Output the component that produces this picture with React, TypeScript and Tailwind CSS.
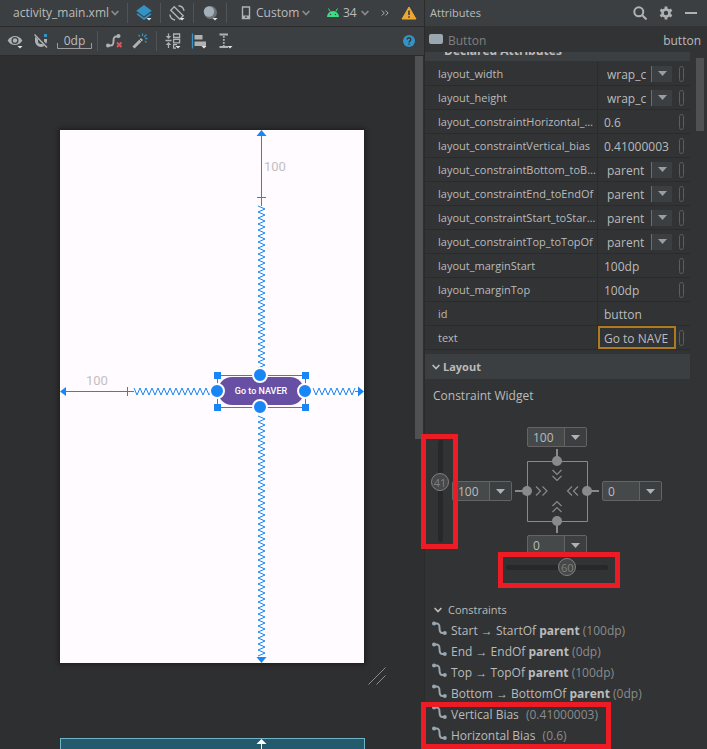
import type { ReactNode } from 'react';
import clsx from 'clsx';

interface Attribute {
  name: string;
  value: string;
  kind: 'select' | 'input';
  flag?: boolean;
  focused?: boolean;
}

const attributes: Attribute[] = [
  { name: 'layout_width', value: 'wrap_c', kind: 'select', flag: true },
  { name: 'layout_height', value: 'wrap_c', kind: 'select', flag: true },
  { name: 'layout_constraintHorizontal_bias', value: '0.6', kind: 'input', flag: true },
  { name: 'layout_constraintVertical_bias', value: '0.41000003', kind: 'input', flag: true },
  { name: 'layout_constraintBottom_toBottomOf', value: 'parent', kind: 'select', flag: true },
  { name: 'layout_constraintEnd_toEndOf', value: 'parent', kind: 'select', flag: true },
  { name: 'layout_constraintStart_toStartOf', value: 'parent', kind: 'select', flag: true },
  { name: 'layout_constraintTop_toTopOf', value: 'parent', kind: 'select', flag: true },
  { name: 'layout_marginStart', value: '100dp', kind: 'input', flag: true },
  { name: 'layout_marginTop', value: '100dp', kind: 'input', flag: true },
  { name: 'id', value: 'button', kind: 'input' },
  { name: 'text', value: 'Go to NAVE', kind: 'input', flag: true, focused: true },
];

const constraints = [
  { from: 'Start', to: 'StartOf', margin: '(100dp)' },
  { from: 'End', to: 'EndOf', margin: '(0dp)' },
  { from: 'Top', to: 'TopOf', margin: '(100dp)' },
  { from: 'Bottom', to: 'BottomOf', margin: '(0dp)' },
];

const biases = [
  { label: 'Vertical Bias', value: '(0.41000003)' },
  { label: 'Horizontal Bias', value: '(0.6)' },
];

// points of a spring line that runs along one axis
function spring(start: number, end: number, center: number, vertical: boolean) {
  const points: string[] = [];
  let side = -1;
  for (let p = start; p <= end; p += 3) {
    const across = center + side * 3.5;
    points.push(vertical ? `${across},${p}` : `${p},${across}`);
    side = -side;
  }
  return points.join(' ');
}

function Chevron({ className }: { className?: string }) {
  return (
    <svg viewBox="0 0 8 6" className={clsx('h-[6px] w-2', className)} fill="none" stroke="currentColor" strokeWidth={1.7}>
      <path d="M0.6 1 4 4.6 7.4 1" />
    </svg>
  );
}

function Corner() {
  return <path d="M10.5 13h5l-2.5 2.5z" fill="#e4e4e4" stroke="none" />;
}

function ToolButton({ label, children }: { label: string; children: ReactNode }) {
  return (
    <button type="button" aria-label={label} className="size-4 shrink-0">
      <svg viewBox="0 0 16 16" className="size-4 overflow-visible" fill="none">
        {children}
      </svg>
    </button>
  );
}

function Separator() {
  return <span className="h-5 w-px shrink-0 bg-[#515355]" />;
}

function ToolSelect({ label, value, className }: { label: string; value: string; className: string }) {
  return (
    <div className={clsx('relative flex shrink-0 items-center', className)}>
      <select aria-label={label} className="w-full appearance-none text-[#bbbbbb] outline-none">
        <option>{value}</option>
      </select>
      <Chevron className="pointer-events-none absolute right-0 text-[#8a8d8f]" />
    </div>
  );
}

function EditorToolbar() {
  return (
    <>
      <div className="flex h-[27px] shrink-0 items-center border-b border-[#2b2b2b] bg-[#3c3f41] pl-[13px]">
        <ToolSelect label="File" value="activity_main.xml" className="w-[106px]" />
        <div className="ml-2 flex items-center gap-2">
          <Separator />
          <ToolButton label="Select design surface">
            <path d="M8 0 15.800 5.800 8 11.500 0.200 5.800z" fill="#3592c4" />
            <path d="M1.800 8.200 8 12.800l6.200-4.600 1.300 1L8 15 0.500 9.200z" fill="#3592c4" />
            <Corner />
          </ToolButton>
          <Separator />
          <ToolButton label="Orientation">
            <g stroke="#afb1b3" strokeWidth={1.4}>
              <path d="m5.200 1.800 9 9-3.400 3.400-9-9z" />
              <path d="M9.500 0.800c3 .2 5 2.200 5.500 5M0.900 9.500c.3 3 2.200 5 5.200 5.500" />
            </g>
            <Corner />
          </ToolButton>
          <Separator />
          <ToolButton label="Night mode">
            <circle cx="8.500" cy="7.500" r="6.500" fill="#6e7377" />
            <circle cx="7" cy="6.500" r="5.200" fill="#a3b0b9" />
            <Corner />
          </ToolButton>
          <Separator />
        </div>
        <svg viewBox="0 0 10 14" className="ml-[14px] h-[14px] w-[10px] shrink-0">
          <path d="M1.500 1h7v11.500h-7z" fill="none" stroke="#afb1b3" strokeWidth={1.4} />
          <path d="M1 9.500h8V13H1z" fill="#afb1b3" />
          <path d="M4 10.500h2v1.200H4z" fill="#3c3f41" />
        </svg>
        <ToolSelect label="Device" value="Custom" className="ml-[5px] w-[54px]" />
        <svg viewBox="0 0 14 10" className="ml-4 h-[10px] w-[14px] shrink-0">
          <path d="M1 9a6 6 0 0 1 12 0z" fill="#3ddc84" />
          <path d="M2.500 0.500 4.200 3.500M11.500 0.500 9.800 3.500" stroke="#3ddc84" strokeWidth={1} />
          <circle cx="4.500" cy="6.500" r="0.700" fill="#3c3f41" />
          <circle cx="9.500" cy="6.500" r="0.700" fill="#3c3f41" />
        </svg>
        <ToolSelect label="API level" value="34" className="ml-[3px] w-[26px]" />
        <button type="button" aria-label="More" className="ml-3 shrink-0">
          <svg viewBox="0 0 8 6" className="h-[6px] w-2" fill="none" stroke="#afb1b3">
            <path d="M0.800 0.500 3.300 3 0.800 5.500M4.600 0.500 7.100 3 4.600 5.500" />
          </svg>
        </button>
        <button type="button" aria-label="Warnings" className="ml-3 shrink-0">
          <svg viewBox="0 0 16 14" className="h-[14px] w-4">
            <path d="M8 1 15 13H1z" fill="#f0a732" stroke="#f0a732" strokeLinejoin="round" />
            <path d="M7.200 4.500h1.600v4.500H7.200zM7.200 10.200h1.600v1.600H7.200z" fill="#3c3f41" />
          </svg>
        </button>
      </div>

      <div className="flex h-[29px] shrink-0 items-center border-b border-[#2b2b2b] bg-[#3c3f41] pr-2 pl-[7px]">
        <div className="flex items-center gap-[10px]">
          <ToolButton label="View options">
            <path d="M0.700 7.500C4 1.500 12 1.500 15.300 7.500 12 13.500 4 13.500 0.700 7.500z" fill="#afb1b3" />
            <circle cx="8" cy="7.500" r="3.500" fill="#3c3f41" />
            <circle cx="8" cy="7.500" r="2.200" fill="#afb1b3" />
            <Corner />
          </ToolButton>
          <ToolButton label="Autoconnect">
            <path d="M3.500 4v4a4.500 4.500 0 0 0 9 0V6" stroke="#afb1b3" strokeWidth={3} />
            <path d="M11 1h3v3h-3z" fill="#3592c4" />
            <path d="M1.500 1 15 14.500" stroke="#3c3f41" strokeWidth={3} />
            <path d="M1.500 1.500 14 14.500" stroke="#afb1b3" strokeWidth={1.5} />
          </ToolButton>
        </div>
        <button
          type="button"
          aria-label="Default margin"
          className="relative ml-2 h-4 w-[35px] shrink-0 text-[12px] leading-[14px] text-[#bbbbbb]"
        >
          0dp
          <svg viewBox="0 0 35 7" className="absolute inset-x-0 -bottom-px h-[7px] w-[35px]" fill="none" stroke="#9a9c9e">
            <path d="M0.500 0v5.500h34V0" />
          </svg>
        </button>
        <div className="ml-[5px] flex items-center gap-2">
          <Separator />
          <div className="flex items-center gap-[10px]">
            <ToolButton label="Clear constraints">
              <path d="M1 12.500h3.500c3 0 3-2 3-4.500s0-4.500 3-4.500H13" stroke="#afb1b3" strokeWidth={2} />
              <circle cx="2" cy="12.500" r="2" fill="#afb1b3" />
              <circle cx="12.500" cy="3" r="2" fill="#afb1b3" />
              <path d="m11 9.500 4.500 4.500M15.500 9.500 11 14" stroke="#db5860" strokeWidth={1.8} />
            </ToolButton>
            <ToolButton label="Infer constraints">
              <path d="m1.500 14.500 8.500-8.500" stroke="#afb1b3" strokeWidth={3} />
              <path d="m7.300 6.300 2.400 2.400" stroke="#3c3f41" strokeWidth={0.8} />
              <path d="M10.500 0.500v2.500M15.500 5.500H13M12 4l2.500-2.500M6.500 2 8 3.500M14.500 9.500 13 8" stroke="#3592c4" strokeWidth={1.3} />
            </ToolButton>
          </div>
          <Separator />
          <div className="flex items-center gap-[10px]">
            <ToolButton label="Pack">
              <g stroke="#afb1b3" strokeWidth={1.3}>
                <path d="M8.600 1h6v3.500h-6zM8.600 6.300h6v3.500h-6zM12 11.600H8.600v3.500h2.400" />
                <path d="M0.500 7.500h6M3.500 0.500v4M3.500 10.500v4.500" />
              </g>
              <path d="M0.800 3h5.400L3.500 6zM0.800 12h5.400L3.500 9z" fill="#afb1b3" />
              <Corner />
            </ToolButton>
            <ToolButton label="Align">
              <path d="M1.500 0.500v15" stroke="#3592c4" strokeWidth={1.3} />
              <path d="M3.500 2h8v4.500h-8zM3.500 8.500H15V13H3.500z" fill="#afb1b3" />
              <Corner />
            </ToolButton>
            <ToolButton label="Guidelines">
              <g stroke="#afb1b3" strokeWidth={1.8}>
                <path d="M2.500 1.500h8.500M2.500 14H11" />
                <path d="M6.800 3v10" strokeDasharray="1.800 1.200" />
              </g>
              <Corner />
            </ToolButton>
          </div>
        </div>
        <button type="button" aria-label="Help" className="ml-auto shrink-0">
          <svg viewBox="0 0 14 14" className="size-[14px]" fill="none">
            <circle cx="7" cy="7" r="6" fill="#3592c4" />
            <path d="M5.200 5.600c0-2.400 3.700-2.300 3.700 0C8.900 7 7 7 7 8.500" stroke="#2b2d2e" strokeWidth={1.2} />
            <path d="M6.400 9.500h1.200v1.300H6.400z" fill="#2b2d2e" />
          </svg>
        </button>
      </div>
    </>
  );
}

function Canvas() {
  return (
    <div className="flex min-h-0 flex-1 justify-between bg-[#2e2f31]">
      <div className="pt-[74px] pl-[60px]">
        <div className="relative h-[533px] w-[304px] bg-[#fffbfe] shadow-[0_0_4px_2px_#1f2021]">
          <button
            type="button"
            className="absolute top-[247px] left-[158px] h-7 w-[86px] rounded-full bg-[#6750a4] font-['Roboto'] text-[9px] font-medium text-white"
          >
            Go to NAVER
          </button>
          <svg viewBox="0 0 304 533" className="pointer-events-none absolute inset-0 h-full w-full" fill="none">
            <g stroke="#1886f7" strokeWidth={1}>
              <path d="M201.500 5v71M197 67.500h9M5 261.500h69M67.500 257v9" />
              <polyline points={spring(76, 238, 201.5, true)} />
              <polyline points={spring(286, 528, 201.5, true)} />
              <polyline points={spring(74, 152, 261.5, false)} />
              <polyline points={spring(253, 297, 261.5, false)} />
              <path d="M295 261.500h4" />
              <path d="M157.500 245.500h88v32h-88z" />
            </g>
            <g fill="#1886f7">
              <path d="m201.500 0 5 6h-10zM201.500 533l5-6h-10zM0 261.500l6-4.500v9zM304 261.500l-6-5v10z" />
              <path d="M154 242h7v7h-7zM242 242h7v7h-7zM154 274h7v7h-7zM242 274h7v7h-7z" />
            </g>
            <g fill="#1886f7" stroke="#fffbfe" strokeWidth={2}>
              <circle cx="200" cy="245" r="7" />
              <circle cx="200" cy="277" r="7" />
              <circle cx="157" cy="261" r="7" />
              <circle cx="245" cy="261" r="7" />
            </g>
          </svg>
          <span className="absolute top-7 left-[204px] font-['Roboto'] text-[13px] leading-[18px] text-[#c2c0c2]">100</span>
          <span className="absolute top-[242px] left-[26px] font-['Roboto'] text-[13px] leading-[18px] text-[#c2c0c2]">100</span>
        </div>
        <svg viewBox="0 0 18 18" className="mt-1 ml-[308px] size-[18px]" stroke="#8b8c8e" strokeWidth={1}>
          <path d="M0.500 17.500l17-17M8.500 17.500l9-9" />
        </svg>
        <div className="mt-[53px] flex h-[533px] w-[305px] border border-[#6fb3c6] bg-[#235b6c]">
          <svg viewBox="0 0 12 100" className="ml-[194px] h-[100px] w-3">
            <path d="M6.500 0l5 5h-10z" fill="#ffffff" />
            <path d="M6.500 4v96" stroke="#ffffff" />
          </svg>
        </div>
      </div>
      <div className="mr-px h-[383px] w-2 shrink-0 bg-[#4f5152]" />
    </div>
  );
}

function AttributeRow({ attribute }: { attribute: Attribute }) {
  const { name, value, kind, flag, focused } = attribute;

  return (
    <div className="flex h-6">
      <label
        htmlFor={name}
        className="w-[172px] shrink-0 truncate border-b border-[#292b2c] pt-px pl-[13px] text-[11px] leading-[22px]"
      >
        {name}
      </label>
      <div className="flex min-w-0 flex-1 items-center border-b border-l border-[#292b2c]">
        {kind === 'select' ? (
          <div className="relative ml-[9px] w-[65px]">
            <select id={name} className="block h-[18px] w-full appearance-none pt-px leading-[17px] outline-none">
              <option>{value}</option>
            </select>
            <span className="pointer-events-none absolute top-px right-0 flex h-4 w-[21px] items-center justify-center border-l border-[#6b6d6f] bg-[#3c3f41]">
              <svg viewBox="0 0 9 5" className="h-[5px] w-[9px]">
                <path d="M0 0h9L4.500 5z" fill="#9a9da0" />
              </svg>
            </span>
          </div>
        ) : (
          <input
            id={name}
            defaultValue={value}
            className={clsx('h-[23px] w-[78px] min-w-0 pt-px outline-none', focused ? 'border-2 border-[#b07a1e] px-1' : 'px-[6px]')}
          />
        )}
        {flag && <span className="mr-[6px] ml-auto h-4 w-[5px] rounded-full border border-[#5b5d5f]" />}
      </div>
    </div>
  );
}

function MarginBox({ label, value, className }: { label: string; value: string; className: string }) {
  return (
    <div className={clsx('flex rounded-[2px] border border-[#646464] bg-[#45494a]', className)}>
      <input aria-label={label} defaultValue={value} className="w-9 min-w-0 pl-[5px] text-[12px] leading-[17px] outline-none" />
      <button type="button" aria-label={`${label} values`} className="flex flex-1 items-center justify-center border-l border-[#646464] bg-[#3c3f41]">
        <svg viewBox="0 0 9 5" className="h-[5px] w-[9px]">
          <path d="M0 0h9L4.500 5z" fill="#afb1b3" />
        </svg>
      </button>
    </div>
  );
}

const thumb =
  'appearance-none bg-transparent outline-none [&::-webkit-slider-thumb]:size-[18px] [&::-webkit-slider-thumb]:appearance-none [&::-webkit-slider-thumb]:rounded-full [&::-webkit-slider-thumb]:border [&::-webkit-slider-thumb]:border-[#808080] [&::-webkit-slider-thumb]:bg-[#45494a]';

function ConstraintWidget() {
  return (
    <div className="mt-4">
      <div className="ml-[6px] flex items-center gap-[3px]">
        <div className="relative flex h-[120px] w-[18px] shrink-0 justify-center">
          <span className="absolute inset-y-[9px] left-[7px] w-[5px] rounded-full bg-[#262829]" />
          <input
            type="range"
            aria-label="Vertical bias"
            defaultValue={41}
            className={clsx('relative h-[120px] w-[18px] [writing-mode:vertical-lr]', thumb)}
          />
          <span className="pointer-events-none absolute inset-x-0 text-center text-[11px] leading-5 text-[#808080]" style={{ top: 0.41 * 102 }}>
            41
          </span>
        </div>
        <div className="grid grid-cols-[60px_84px_60px] grid-rows-[20px_84px_20px] place-items-center gap-x-[3px] gap-y-[2px]">
          <MarginBox label="Top margin" value="100" className="col-start-2 h-5 w-[60px]" />
          <MarginBox label="Left margin" value="100" className="col-start-1 row-start-2 h-5 w-[60px]" />
          <svg viewBox="0 0 84 84" className="row-start-2 size-[84px]" fill="none" stroke="#8a8a8a">
            <path d="M12.500 12.500h60v60h-60z" />
            <path d="M42 0v12M42 72v12M0 42h12M72 42h12" strokeWidth={2} />
            <g fill="#8a8a8a" stroke="none">
              <circle cx="42" cy="12" r="5" />
              <circle cx="42" cy="72" r="5" />
              <circle cx="12" cy="42" r="5" />
              <circle cx="72" cy="42" r="5" />
            </g>
            <g strokeWidth={1.2}>
              <path d="m37.500 21 4.500 4.500 4.500-4.500M37.500 27l4.500 4.500 4.500-4.500" />
              <path d="m37.500 57 4.500-4.500 4.500 4.500M37.500 63l4.500-4.500 4.500 4.500" />
              <path d="m21 37.500 4.500 4.500-4.500 4.500M27.500 37.500 32 42l-4.500 4.500" />
              <path d="M57 37.500 52.500 42l4.500 4.500M63 37.500 58.500 42l4.500 4.500" />
            </g>
          </svg>
          <MarginBox label="Right margin" value="0" className="row-start-2 h-5 w-[60px]" />
          <MarginBox label="Bottom margin" value="0" className="col-start-2 row-start-3 h-5 w-[60px]" />
        </div>
      </div>
      <div className="relative mt-[3px] ml-[72px] h-[18px] w-[120px]">
        <span className="absolute inset-x-[9px] top-[7px] h-[5px] rounded-full bg-[#262829]" />
        <div className="absolute -top-[6px] left-px h-9 w-[122px] border-5 border-[#ed1c24]" />
        <input type="range" aria-label="Horizontal bias" defaultValue={60} className={clsx('relative block h-[18px] w-[120px]', thumb)} />
        <span className="pointer-events-none absolute top-0 w-[18px] text-center text-[11px] leading-5 text-[#808080]" style={{ left: 0.6 * 102 }}>
          60
        </span>
      </div>
    </div>
  );
}

function ConstraintRow({ children }: { children: ReactNode }) {
  return (
    <li className="flex h-[21px] items-start gap-1 pl-[7px] leading-[21px] whitespace-nowrap">
      <svg viewBox="0 0 15 15" className="mt-px size-[15px] shrink-0" fill="none">
        <path d="M2 2.500h2.500c2.500 0 3 1 3 4.500s.5 5 3 5H13" stroke="#9aa7b0" strokeWidth={2} />
        <circle cx="2" cy="2.500" r="2" fill="#9aa7b0" />
        <circle cx="12.800" cy="12" r="2" fill="#9aa7b0" />
      </svg>
      <span>{children}</span>
    </li>
  );
}

function AttributesPanel() {
  return (
    <aside className="flex w-[283px] shrink-0 flex-col border-l border-[#2b2b2b] bg-[#313335]">
      <header className="flex h-[26px] shrink-0 items-center bg-[#3c3f41] pr-[10px] pl-[5px]">
        <h1 className="flex-1 text-[11px]">Attributes</h1>
        <div className="flex items-center gap-3">
          <button type="button" aria-label="Search">
            <svg viewBox="0 0 14 14" className="size-[14px]" fill="none" stroke="#afb1b3" strokeWidth={2}>
              <circle cx="5.800" cy="5.800" r="4.500" />
              <path d="m9 9 4.500 4.500" />
            </svg>
          </button>
          <button type="button" aria-label="Settings">
            <svg viewBox="0 0 14 14" className="size-[14px]" fill="none" stroke="#afb1b3">
              <circle cx="7" cy="7" r="3.500" strokeWidth={2.6} />
              <path d="M7 0.500v2.500M7 11v2.500M1.400 3.800l2.100 1.200M10.500 9l2.100 1.200M1.400 10.200 3.500 9M10.500 5l2.100-1.200" strokeWidth={2.8} />
            </svg>
          </button>
          <button type="button" aria-label="Hide" className="flex h-[14px] w-3 items-center">
            <span className="h-[2px] w-3 bg-[#afb1b3]" />
          </button>
        </div>
      </header>

      <div className="flex h-[26px] shrink-0 items-center pr-[6px] pl-1">
        <span className="h-[10px] w-[14px] rounded-[2px] bg-[#9aa7b0]" />
        <span className="ml-[5px] flex-1 pt-1 text-[#808080]">Button</span>
        <span className="pt-1">button</span>
      </div>

      <div className="flex min-h-0 flex-1 justify-between">
        <div className="w-[265px]">
          <div className="mb-px flex h-[9px] flex-col justify-end overflow-hidden">
            <h2 className="h-[25px] shrink-0 bg-[#3c3f41] pl-[19px] leading-[29px] font-bold">Declared Attributes</h2>
          </div>
          {attributes.map((attribute) => (
            <AttributeRow key={attribute.name} attribute={attribute} />
          ))}

          <h2 className="mt-1 flex h-[25px] items-center gap-[3px] bg-[#3c3f41] pt-px pl-[7px] text-[11px] font-bold">
            <Chevron />
            Layout
          </h2>
          <h3 className="h-8 pl-2 leading-[34px]">Constraint Widget</h3>
          <div className="relative">
            <ConstraintWidget />
            <div className="pointer-events-none absolute top-[7px] -left-1 h-[115px] w-[37px] border-5 border-[#ed1c24]" />
          </div>

          <h3 className="mt-[23px] flex h-[21px] items-center gap-[6px] pt-px pl-[9px] text-[11px]">
            <Chevron />
            Constraints
          </h3>
          <ul>
            {constraints.map((item) => (
              <ConstraintRow key={item.from}>
                {item.from} → {item.to} <b>parent</b> <span className="text-[#8c8c8c]">{item.margin}</span>
              </ConstraintRow>
            ))}
          </ul>
          <ul className="relative">
            {biases.map((item) => (
              <ConstraintRow key={item.label}>
                {item.label} <span className="ml-1 text-[#8c8c8c]">{item.value}</span>
              </ConstraintRow>
            ))}
            <li aria-hidden="true" className="absolute -top-[2px] -left-1 h-[47px] w-[190px] border-5 border-[#ed1c24]" />
          </ul>
        </div>
        <div className="mt-[6px] mr-[3px] h-[73px] w-2 shrink-0 bg-[#4f5152]" />
      </div>
    </aside>
  );
}

export default function App() {
  return (
    <div className="flex h-screen overflow-hidden bg-[#313335] font-['Open_Sans','Noto_Sans',sans-serif] text-[12px] leading-4 text-[#bbbbbb]">
      <main className="flex min-w-0 flex-1 flex-col">
        <EditorToolbar />
        <Canvas />
      </main>
      <AttributesPanel />
    </div>
  );
}
